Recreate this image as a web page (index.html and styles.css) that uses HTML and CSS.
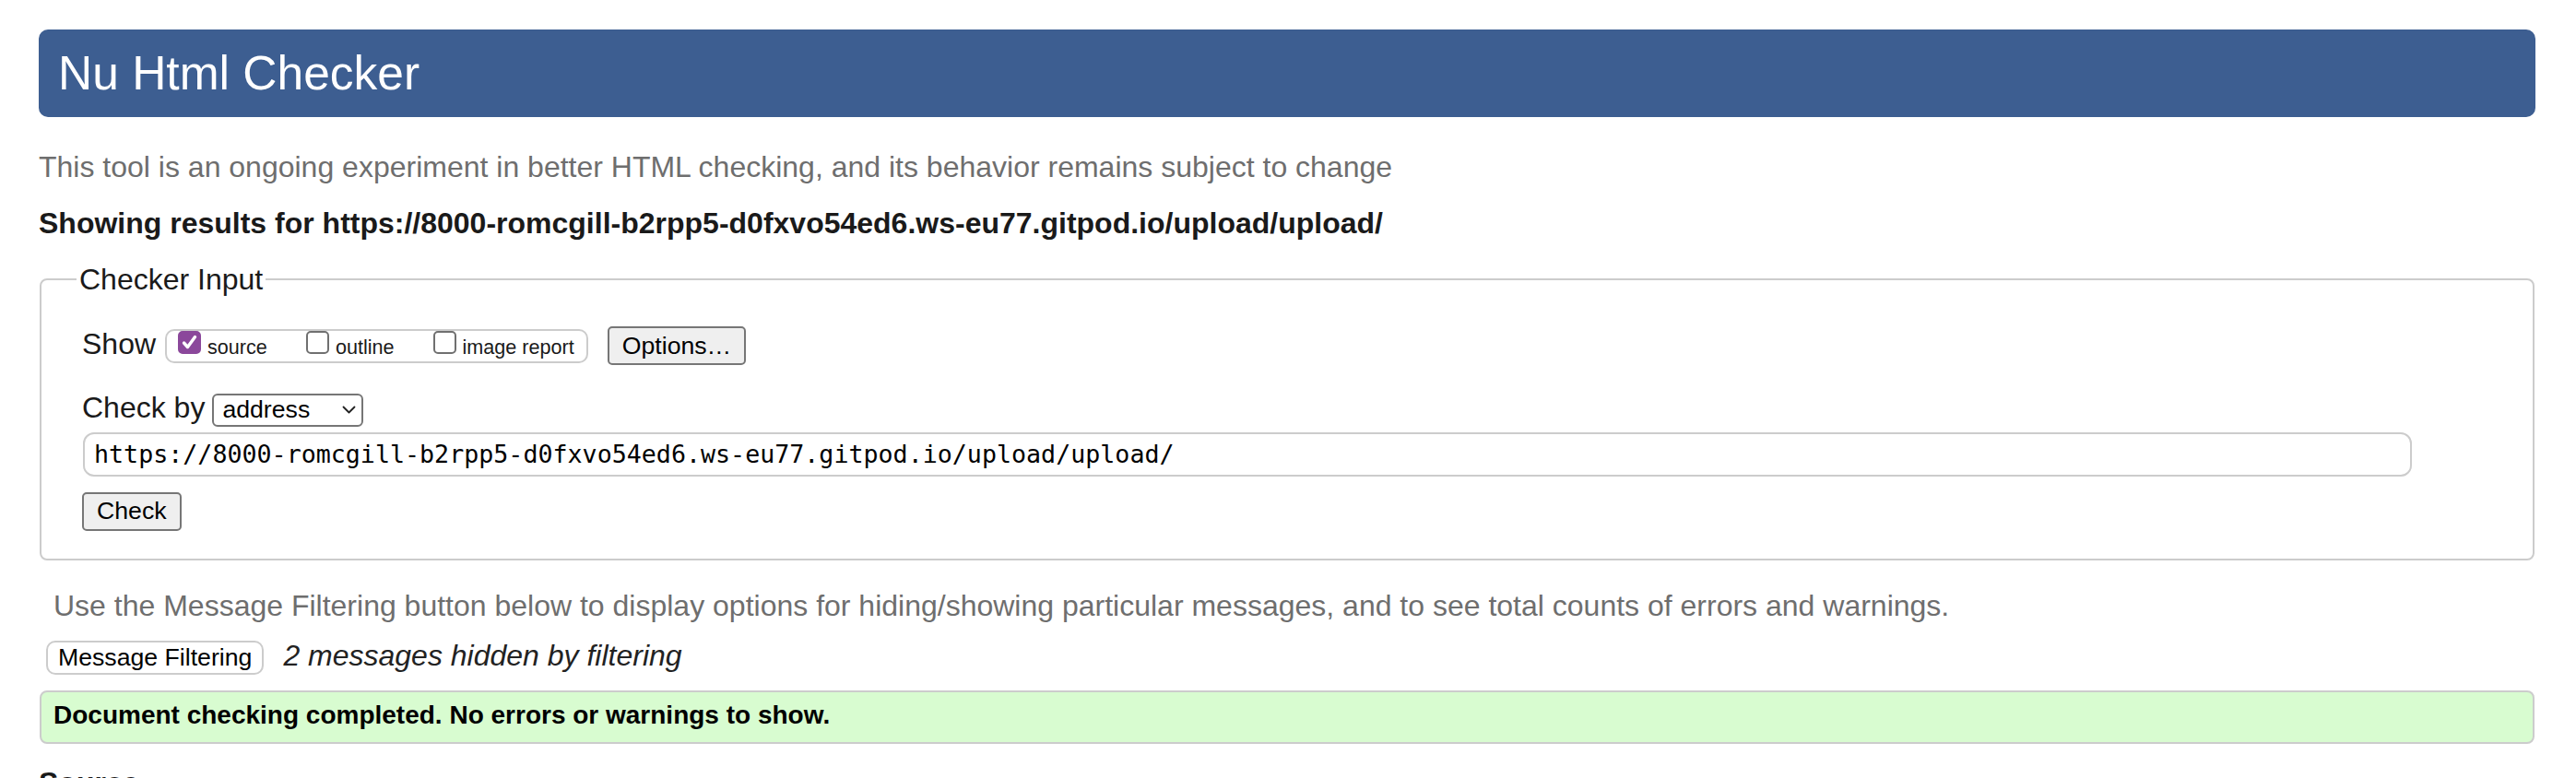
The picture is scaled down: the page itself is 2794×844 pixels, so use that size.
FILE: index.html
```html
<!DOCTYPE html>
<html lang="en">
<head>
<meta charset="utf-8">
<title>Nu Html Checker</title>
<link rel="stylesheet" href="styles.css">
</head>
<body>
<h1 class="title">Nu Html Checker</h1>
<p class="intro">This tool is an ongoing experiment in better HTML checking, and its behavior remains subject to change</p>
<p class="results">Showing results for https://8000-romcgill-b2rpp5-d0fxvo54ed6.ws-eu77.gitpod.io/upload/upload/</p>
<form class="form">
  <fieldset class="checker">
    <legend class="legend">Checker Input</legend>
    <div class="row row-show">
      <span class="label">Show</span>
      <span class="opts">
        <label class="opt"><span class="cb cb-on"><svg class="tick" width="25" height="25" viewBox="0 0 25 25"><path d="M6.5 13 L10.5 17.5 L18.5 6.5" fill="none" stroke="#fff" stroke-width="3.4" stroke-linecap="round" stroke-linejoin="round"/></svg></span><span class="opt-text">source</span></label>
        <label class="opt"><span class="cb"></span><span class="opt-text">outline</span></label>
        <label class="opt opt-last"><span class="cb"></span><span class="opt-text">image report</span></label>
      </span>
      <button type="button" class="btn btn-options">Options…</button>
    </div>
    <div class="row row-by">
      <span class="label">Check by</span>
      <span class="select"><span class="select-text">address</span><svg class="chev" width="15" height="9" viewBox="0 0 15 9"><path d="M1.5 1.5 L7.5 7.5 L13.5 1.5" fill="none" stroke="#222" stroke-width="1.8" stroke-linecap="round" stroke-linejoin="round"/></svg></span>
    </div>
    <input class="url" type="text" value="https://8000-romcgill-b2rpp5-d0fxvo54ed6.ws-eu77.gitpod.io/upload/upload/">
    <div class="row row-check">
      <button type="button" class="btn">Check</button>
    </div>
  </fieldset>
</form>
<p class="note">Use the Message Filtering button below to display options for hiding/showing particular messages, and to see total counts of errors and warnings.</p>
<div class="filter-row">
  <button type="button" class="btn-filter">Message Filtering</button>
  <em class="hidden-count">2 messages hidden by filtering</em>
</div>
<div class="success">Document checking completed. No errors or warnings to show.</div>
<h2 class="source">Source</h2>
</body>
</html>
```
FILE: styles.css
```css
html, body {
  background: #ffffff;
}
body {
  margin: 0;
  padding: 32px 44px 0 42px;
  font-family: "Liberation Sans", Arial, sans-serif;
  font-size: 32px;
  color: #1a1a1a;
}
.title {
  margin: 0;
  height: 95px;
  line-height: 95px;
  padding-left: 21px;
  background: #3d5e91;
  color: #ffffff;
  font-size: 51.5px;
  font-weight: normal;
  border-radius: 10px;
}
.intro {
  margin: 34px 0 0;
  line-height: 40px;
  color: #6e6e6e;
}
.results {
  margin: 21px 0 0;
  line-height: 40px;
  font-weight: bold;
  color: #1a1a1a;
}
.form {
  margin: 0;
}
.checker {
  margin: 21px 1px 0;
  padding: 31px 0 30px 44px;
  border: 2px solid #cccccc;
  border-radius: 8px;
  min-inline-size: 0;
}
.legend {
  margin-left: -6px;
  padding: 0 3px;
  line-height: 40px;
  font-size: 32px;
}
.row {
  display: flex;
  align-items: baseline;
}
.label {
  line-height: 36px;
}
.opts {
  display: flex;
  align-items: baseline;
  box-sizing: border-box;
  height: 37px;
  margin-left: 10px;
  padding: 0 13px 0 12px;
  border: 2px solid #cccccc;
  border-radius: 10px;
  font-size: 21.6px;
  line-height: 24px;
}
.opt {
  display: flex;
  align-items: baseline;
  margin-right: 42px;
}
.opt-last {
  margin-right: 0;
}
.cb {
  position: relative;
  display: block;
  box-sizing: border-box;
  width: 25px;
  height: 25px;
  margin-right: 7px;
  border: 2px solid #707070;
  border-radius: 5px;
  background: #ffffff;
}
.cb-on {
  border-color: #8b489b;
  background: #8b489b;
}
.tick {
  position: absolute;
  left: -2px;
  top: -2px;
}
.btn {
  box-sizing: border-box;
  height: 42px;
  padding: 0 14px;
  border: 2px solid #767676;
  border-radius: 5px;
  background: #efefef;
  color: #000000;
  font-family: "Liberation Sans", Arial, sans-serif;
  font-size: 26.67px;
}
.btn-options {
  margin-left: 21px;
}
.row-by {
  margin-top: 28px;
}
.select {
  display: flex;
  align-items: center;
  box-sizing: border-box;
  width: 164px;
  height: 36px;
  margin-left: 8px;
  padding-left: 9px;
  border: 2px solid #767676;
  border-radius: 6px;
  background: #ffffff;
  color: #000000;
  font-size: 26.67px;
}
.chev {
  margin-left: auto;
  margin-right: 6px;
}
.url {
  display: block;
  box-sizing: border-box;
  width: 2526px;
  height: 48px;
  margin: 6px 0 0 1px;
  padding: 0 0 0 10px;
  border: 2px solid #cccccc;
  border-radius: 12px;
  background: #ffffff;
  color: #000000;
  font-family: "DejaVu Sans Mono", "Liberation Mono", monospace;
  font-size: 26.67px;
}
.row-check {
  margin-top: 17px;
}
.note {
  margin: 29px 0 0 16px;
  line-height: 40px;
  color: #6e6e6e;
}
.filter-row {
  display: flex;
  align-items: baseline;
  margin-top: 18px;
}
.btn-filter {
  box-sizing: border-box;
  height: 37px;
  margin-left: 8px;
  padding: 0 11px;
  border: 2px solid #cccccc;
  border-radius: 10px;
  background: #ffffff;
  color: #000000;
  font-family: "Liberation Sans", Arial, sans-serif;
  font-size: 26.67px;
}
.hidden-count {
  margin-left: 21px;
  line-height: 32px;
  color: #222222;
}
.success {
  margin: 17px 1px 0;
  padding: 0 0 4px 13px;
  border: 2px solid #cccccc;
  border-radius: 8px;
  background: #d8fcd0;
  color: #000000;
  font-size: 28px;
  font-weight: bold;
  line-height: 50px;
}
.source {
  margin: 22px 0 0;
  font-size: 32px;
  line-height: 40px;
  font-weight: bold;
}
```
